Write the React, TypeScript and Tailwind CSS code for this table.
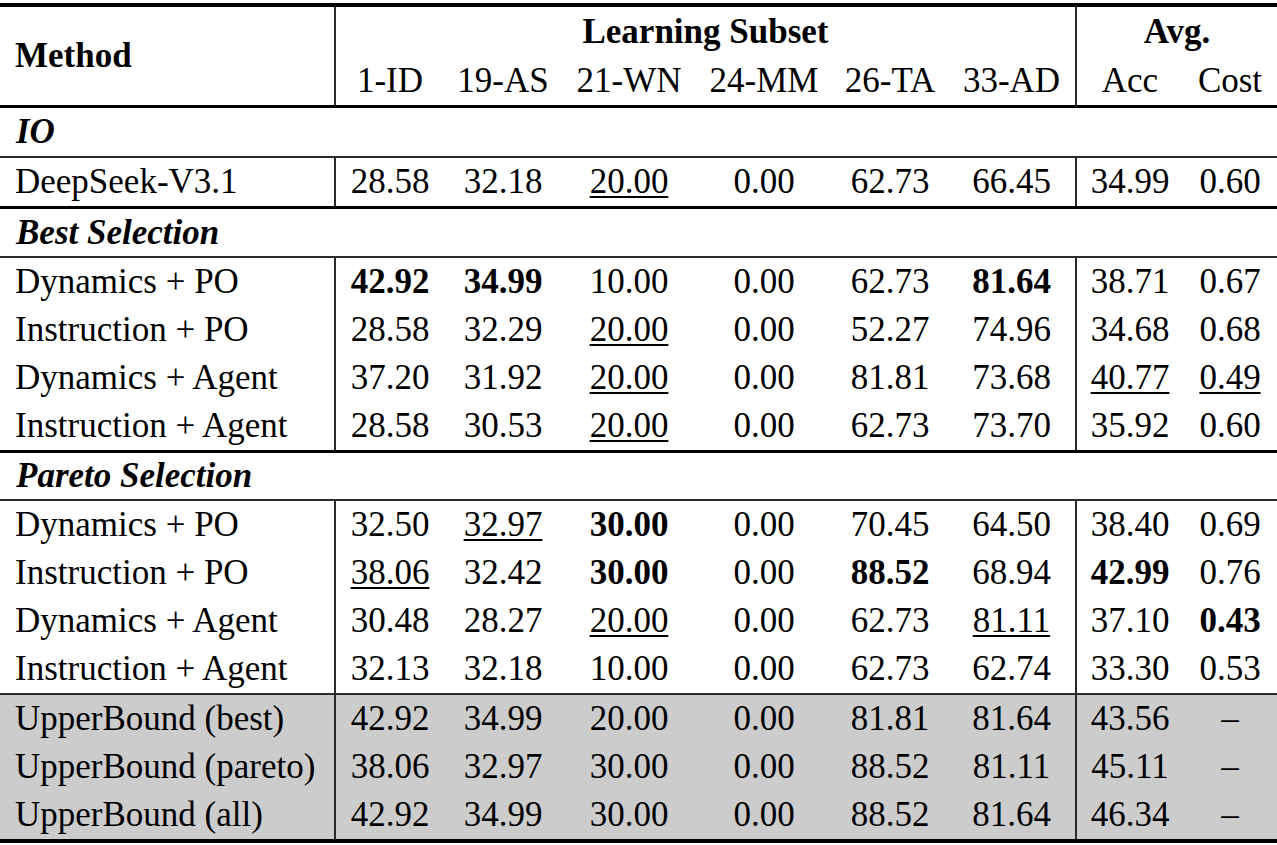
import React from "react";

const COLS = "grid grid-cols-[336px_108px_118px_134px_136px_116px_129px_106px_94px]";

type Row = [string, string[]];

const io: Row[] = [["DeepSeek-V3.1", ["28.58", "32.18", "_20.00", "0.00", "62.73", "66.45", "34.99", "0.60"]]];

const best: Row[] = [
  ["Dynamics + PO", ["*42.92", "*34.99", "10.00", "0.00", "62.73", "*81.64", "38.71", "0.67"]],
  ["Instruction + PO", ["28.58", "32.29", "_20.00", "0.00", "52.27", "74.96", "34.68", "0.68"]],
  ["Dynamics + Agent", ["37.20", "31.92", "_20.00", "0.00", "81.81", "73.68", "_40.77", "_0.49"]],
  ["Instruction + Agent", ["28.58", "30.53", "_20.00", "0.00", "62.73", "73.70", "35.92", "0.60"]],
];

const pareto: Row[] = [
  ["Dynamics + PO", ["32.50", "_32.97", "*30.00", "0.00", "70.45", "64.50", "38.40", "0.69"]],
  ["Instruction + PO", ["_38.06", "32.42", "*30.00", "0.00", "*88.52", "68.94", "*42.99", "0.76"]],
  ["Dynamics + Agent", ["30.48", "28.27", "_20.00", "0.00", "62.73", "_81.11", "37.10", "*0.43"]],
  ["Instruction + Agent", ["32.13", "32.18", "10.00", "0.00", "62.73", "62.74", "33.30", "0.53"]],
];

const upper: Row[] = [
  ["UpperBound (best)", ["42.92", "34.99", "20.00", "0.00", "81.81", "81.64", "43.56", "–"]],
  ["UpperBound (pareto)", ["38.06", "32.97", "30.00", "0.00", "88.52", "81.11", "45.11", "–"]],
  ["UpperBound (all)", ["42.92", "34.99", "30.00", "0.00", "88.52", "81.64", "46.34", "–"]],
];

function Val({ v }: { v: string }) {
  if (v.startsWith("*")) return <span className="font-bold">{v.slice(1)}</span>;
  if (v.startsWith("_"))
    return (
      <span className="underline decoration-[1.5px] underline-offset-[3px]">{v.slice(1)}</span>
    );
  return <span>{v}</span>;
}

function DataRow({ row }: { row: Row }) {
  const [name, vals] = row;
  return (
    <div className={`${COLS} h-[48px]`}>
      <div className="flex items-center pl-[15px] border-r-2 border-[#2a2a2a] whitespace-nowrap">{name}</div>
      {vals.map((v, i) => (
        <div
          key={i}
          className={`flex items-center justify-center whitespace-nowrap ${i === 5 ? "border-r-2 border-[#2a2a2a]" : ""}`}
        >
          <Val v={v} />
        </div>
      ))}
    </div>
  );
}

function Section({ title, h }: { title: string; h: string }) {
  return (
    <div className={`flex items-center pl-[16px] font-bold italic ${h}`}>{title}</div>
  );
}

const Thick = () => <div className="h-[3px] bg-black" />;
const Thin = () => <div className="h-[2px] bg-[#2a2a2a]" />;

export default function App() {
  return (
    <div
      className="w-[1277px] h-[845px] bg-white text-black pt-[3px] text-[35px] leading-[48px]"
      style={{ fontFamily: '"Liberation Serif", "Times New Roman", serif' }}
    >
      <div className="h-[4px] bg-black" />
      <div className={`${COLS} grid-rows-[49px_49px]`}>
        <div className="row-span-2 flex items-center pl-[15px] font-bold border-r-2 border-[#2a2a2a]">Method</div>
        <div className="col-span-6 flex items-center justify-center font-bold border-r-2 border-[#2a2a2a]">
          Learning Subset
        </div>
        <div className="col-span-2 flex items-center justify-center font-bold">Avg.</div>
        {["1-ID", "19-AS", "21-WN", "24-MM", "26-TA", "33-AD", "Acc", "Cost"].map((h, i) => (
          <div
            key={h}
            className={`flex items-center justify-center whitespace-nowrap ${i === 5 ? "border-r-2 border-[#2a2a2a]" : ""}`}
          >
            {h}
          </div>
        ))}
      </div>
      <Thick />
      <Section title="IO" h="h-[48px]" />
      <Thin />
      {io.map((r, i) => (
        <DataRow key={i} row={r} />
      ))}
      <Thick />
      <Section title="Best Selection" h="h-[47px]" />
      <Thin />
      {best.map((r, i) => (
        <DataRow key={i} row={r} />
      ))}
      <Thick />
      <Section title="Pareto Selection" h="h-[46px]" />
      <Thin />
      {pareto.map((r, i) => (
        <DataRow key={i} row={r} />
      ))}
      <Thin />
      <div className="bg-[#cccccc]">
        {upper.map((r, i) => (
          <DataRow key={i} row={r} />
        ))}
      </div>
      <div className="h-[4px] bg-black" />
    </div>
  );
}
